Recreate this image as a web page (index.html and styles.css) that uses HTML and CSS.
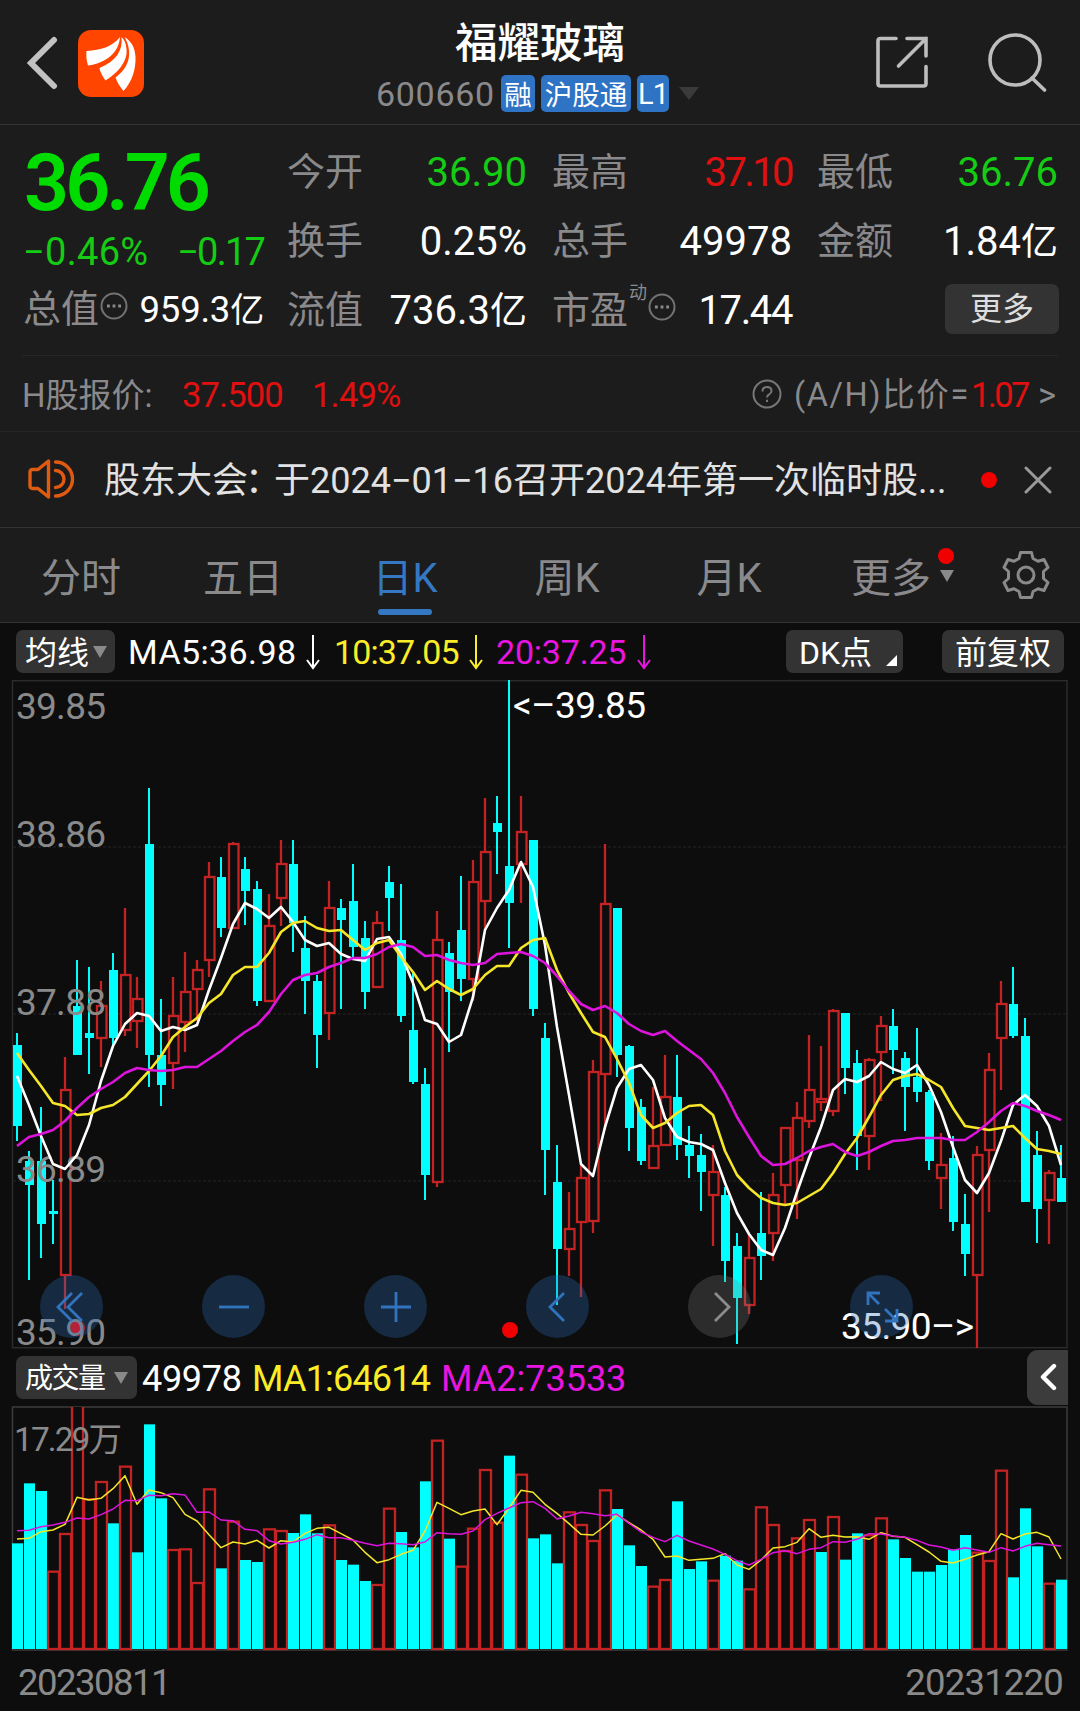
FILE: index.html
```html
<!DOCTYPE html>
<html lang="zh-CN">
<head>
  <meta charset="UTF-8">
  <meta name="viewport" content="width=device-width, initial-scale=1.0">
  <title>福耀玻璃 600660</title>
  <link rel="stylesheet" href="styles.css">
</head>
<body>
  <div id="wrap">
    <header class="header">
      <div class="headleft">
        <svg class="back" width="32" height="54" viewBox="0 0 32 54"><path d="M28 4 L5 27 L28 50"/></svg>
        <svg class="logo" width="66" height="67" viewBox="0 0 66 67">
          <rect width="66" height="67" rx="13"/>
          <path d="M8.500 21 C23 20 34 17 42 7 C41 22 29 33 10 35.500 C8.500 31 8 26 8.500 21 Z"/>
          <path d="M43.500 7 C45 21 38 31 21.500 38 C22 42 25 47 27.500 50.500 C40 43 50 31 48.500 19 C48 13 46 9 43.500 7 Z"/>
          <path d="M46.500 7 C55 22 52 37 37.500 47.500 C39 52 42 57 45.500 61 C54 52 58 39 57.500 27 C57 17 53 11 46.500 7 Z"/>
        </svg>
      </div>
      <div class="headmid">
        <h1>福耀玻璃</h1>
        <div class="code"><span class="num">600660</span><i>融</i><i class="hgt">沪股通</i><i class="l1">L1</i><b class="down"></b></div>
      </div>
      <div class="headright">
        <svg width="54" height="54" viewBox="0 0 54 54"><path d="M21 3.500 H5.500 Q3 3.500 3 6 V48.500 Q3 51 5.500 51 H48.500 Q51 51 51 48.500 V31.500 M32 3.500 H51 V21 M51 3.500 L23.500 31"/></svg>
        <svg width="60" height="60" viewBox="0 0 60 60"><circle cx="28" cy="28" r="25"/><path d="M45 46 L57.500 58"/></svg>
      </div>
    </header>

    <section class="quote">
      <div class="now">
        <div class="price">36.76</div>
        <div class="chg"><span>−0.46%</span><span class="amt">−0.17</span></div>
        <div class="cell small"><label>总值</label><svg class="dots" width="28" height="28" viewBox="0 0 28 28"><circle cx="14" cy="14" r="12.500"/><path d="M7 14h2.800M12.600 14h2.800M18.200 14h2.800"/></svg><em>959.3<u>亿</u></em></div>
      </div>
      <div class="cells">
        <div class="cell"><label>今开</label><em class="green">36.90</em></div>
        <div class="cell"><label>最高</label><em class="red tight">37.10</em></div>
        <div class="cell"><label>最低</label><em class="green">36.76</em></div>
        <div class="cell"><label>换手</label><em>0.25%</em></div>
        <div class="cell"><label>总手</label><em>49978</em></div>
        <div class="cell"><label>金额</label><em>1.84<u>亿</u></em></div>
        <div class="cell"><label>流值</label><em>736.3<u>亿</u></em></div>
        <div class="cell"><label>市盈<sup>动</sup></label><svg class="dots" width="28" height="28" viewBox="0 0 28 28"><circle cx="14" cy="14" r="12.500"/><path d="M7 14h2.800M12.600 14h2.800M18.200 14h2.800"/></svg><em class="pe">17.44</em></div>
        <div class="cell last"><button class="more">更多</button></div>
      </div>
    </section>

    <section class="hstock">
      <span class="hname">H股报价:</span>
      <span class="red hp">37.500</span>
      <span class="red hr">1.49%</span>
      <svg width="30" height="30" viewBox="0 0 30 30"><circle cx="15" cy="15" r="13.500"/><path d="M10.500 12.500 Q10.500 8 15 8 Q19.500 8 19.500 12 Q19.500 14 17 15.500 Q15 16.600 15 18.500 M15 20.800 V23"/></svg>
      <span class="ah">(A/H)比价=</span><span class="red bi">1.07</span><span class="gt">&gt;</span>
    </section>

    <section class="notice">
      <svg class="horn" width="48" height="42" viewBox="0 0 48 42"><path d="M21.500 3 V39 L11 30.500 H5.500 Q3 30.500 3 28 V14 Q3 11.500 5.500 11.500 H11 Z"/><path d="M28.500 12.500 A 8.500 8.500 0 0 1 28.500 29.500 M28.500 4 A 17 17 0 0 1 28.500 38"/></svg>
      <p>股东大会<span class="colon">：</span>于2024−01−16召开2024年第一次临时股...</p>
      <b class="dot"></b>
      <svg class="close" width="28" height="28" viewBox="0 0 28 28"><path d="M2 2 L26 26 M26 2 L2 26"/></svg>
    </section>

    <nav class="tabs">
      <a>分时</a>
      <a>五日</a>
      <a class="on">日K</a>
      <a>周K</a>
      <a>月K</a>
      <a class="moretab">更多<b class="down"></b><b class="dot"></b></a>
      <svg class="gear" width="52" height="52" viewBox="-26 -26 52 52"><path d="M-5.500 -22.500 H5.500 L7 -16.500 L12 -13.800 L18 -15.500 L22 -7.500 L17.500 -3.500 V3.500 L22 7.500 L18 15.500 L12 13.800 L7 16.500 L5.500 22.500 H-5.500 L-7 16.500 L-12 13.800 L-18 15.500 L-22 7.500 L-17.500 3.500 V-3.500 L-22 -7.500 L-18 -15.500 L-12 -13.800 L-7 -16.500 Z"/><circle r="8"/></svg>
    </nav>

    <div class="mabar">
      <button class="chip avg">均线<b class="down"></b></button>
      <span class="w ma5">MA5:36.98</span><svg class="arr w" width="14" height="36" viewBox="0 0 14 36"><path d="M7 1 V34 M1 26 L7 34 L13 26"/></svg>
      <span class="y ma10">10:37.05</span><svg class="arr y" width="14" height="36" viewBox="0 0 14 36"><path d="M7 1 V34 M1 26 L7 34 L13 26"/></svg>
      <span class="m ma20">20:37.25</span><svg class="arr m" width="14" height="36" viewBox="0 0 14 36"><path d="M7 1 V34 M1 26 L7 34 L13 26"/></svg>
      <button class="chip dk">DK点<b class="corner"></b></button>
      <button class="chip fq">前复权</button>
    </div>

    <div class="kbox">
      <svg id="kchart" width="1080" height="668" viewBox="0 680 1080 668"></svg>
      <div class="ctrls">
        <button><svg width="64" height="64" viewBox="-32 -32 64 64"><path d="M0 -14 L-14 0 L0 14 M10 -14 L-4 0 L10 14"/></svg></button>
        <button><svg width="64" height="64" viewBox="-32 -32 64 64"><path d="M-15 0 H15"/></svg></button>
        <button><svg width="64" height="64" viewBox="-32 -32 64 64"><path d="M-15 0 H15 M0 -15 V15"/></svg></button>
        <button><svg width="64" height="64" viewBox="-32 -32 64 64"><path d="M6 -14 L-8 0 L6 14"/></svg></button>
        <button class="off"><svg width="64" height="64" viewBox="-32 -32 64 64"><path d="M-5 -14 L9 0 L-5 14"/></svg></button>
        <button><svg width="64" height="64" viewBox="-32 -32 64 64"><path d="M-2 -14 H-14 V-2 M-14 -14 L-3 -3 M15 2 V14 H3 M15 14 L3 2"/></svg></button>
      </div>
    </div>

    <div class="volbar">
      <button class="chip vol">成交量<b class="down"></b></button>
      <span class="w v0">49978</span>
      <span class="y v1">MA1:64614</span>
      <span class="m v2">MA2:73533</span>
      <button class="side"><svg width="18" height="28" viewBox="0 0 18 28"><path d="M15 3 L4 14 L15 25"/></svg></button>
    </div>
    <svg id="vchart" width="1080" height="246" viewBox="0 1406 1080 246"></svg>
    <div class="dates"><span>20230811</span><span class="end">20231220</span></div>
  </div>

  <script src="chart.js"></script>
</body>
</html>
```
FILE: styles.css
```css
* { margin: 0; padding: 0; box-sizing: border-box; }
body {
  width: 1080px;
  background: #0d0d0d;
  color: #fff;
  font-family: Roboto, "Noto Sans CJK SC", sans-serif;
  line-height: 1.2;
}
i, em { font-style: normal; }
u { text-decoration: none; }
svg { display: block; fill: none; }
button { border: 0; color: #fff; font-family: inherit; line-height: 1.2; }
#wrap {
  width: 1080px;
  height: 1711px;
  overflow: hidden;
}
.red { color: #e01010; }
.green { color: #14cc14; }
.w { color: #fff; stroke: #fff; }
.y { color: #fbec28; stroke: #fbec28; }
.m { color: #e815e0; stroke: #e815e0; }
span.w, span.y, span.m { stroke: none; }
.down {
  display: inline-block;
  border: 7px solid transparent;
  border-top: 12px solid #8a8a8d;
  border-bottom: 0;
}
.dot {
  width: 16px;
  height: 16px;
  border-radius: 50%;
  background: #f00000;
}

/* header */
.header {
  height: 125px;
  display: flex;
  justify-content: space-between;
  background: #1c1c1c;
  border-bottom: 1px solid #333;
}
.headleft {
  width: 340px;
  display: flex;
  padding: 30px 0 0 25.5px;
}
.back { margin: 6px 20px 0 0; stroke: #c2c2c2; stroke-width: 6; stroke-linecap: round; }
.logo rect { fill: #ff4500; }
.logo path { fill: #fff; }
.headmid {
  width: 400px;
  padding-top: 19px;
}
h1 {
  font-size: 42.5px;
  font-weight: 500;
  line-height: 50px;
  text-align: center;
}
.code {
  display: flex;
  align-items: center;
  height: 38px;
  margin-top: 5px;
  padding-left: 36px;
}
.code .num {
  width: 125px;
  padding-top: 3px;
  font-size: 34px;
  color: #8a8a8d;
  letter-spacing: 0.7px;
}
.code i {
  height: 37px;
  width: 34px;
  margin-right: 6px;
  border-radius: 5px;
  background: #2f73c4;
  font-size: 27.5px;
  line-height: 41px;
  text-align: center;
  white-space: nowrap;
}
.code i.hgt { width: 90px; }
.code i.l1 { width: 32px; font-size: 29px; line-height: 39px; letter-spacing: -1px; }
.code .down {
  margin-left: 4px;
  border-width: 13px 10px 0;
  border-top-color: #3a3a3a;
}
.headright {
  width: 340px;
  display: flex;
  justify-content: flex-end;
  padding: 32px 33px 0 0;
}
.headright svg { stroke: #bdbdbd; stroke-width: 3.6; stroke-linecap: round; }
.headright svg:first-child { margin: 3px 58px 0 0; }

/* quote */
.quote {
  height: 230px;
  display: flex;
  background: #1c1c1c;
  padding: 13px 22px 0 24px;
}
.now { width: 241px; }
.price {
  height: 89px;
  font-size: 79px;
  line-height: 91px;
  font-weight: 600;
  letter-spacing: -4px;
  color: #00dc00;
}
.chg {
  height: 48px;
  display: flex;
  justify-content: space-between;
  font-size: 38px;
  line-height: 51px;
  color: #14cc14;
  letter-spacing: 0.3px;
}
.chg span:first-child { margin-left: -1px; }
.chg .amt { letter-spacing: -1.8px; }
.cells {
  margin-left: 23px;
  display: grid;
  grid-template-columns: 240px 240px 241px;
  column-gap: 25px;
  grid-template-rows: 69px 69px 68px;
}
.cell {
  display: flex;
  height: 69px;
  align-items: center;
}
.cell label {
  position: relative;
  font-size: 38px;
  color: #8a8a8d;
  white-space: nowrap;
}
.cell sup {
  position: absolute;
  left: 77px;
  top: -6px;
  font-size: 18px;
}
.cell em {
  margin-left: auto;
  font-size: 40px;
}
.cell em u { font-size: 37px; }
.cell em.tight { letter-spacing: -2.6px; }
.cell em.pe { letter-spacing: -1.4px; }
.cell .dots { margin: -7px 0 0 1px; }
.cells .dots { margin-left: 20px; }
.small label { margin-left: -1px; }
.small em { font-size: 36.5px; letter-spacing: -0.2px; }
.small em u { font-size: 34px; }
.dots circle { stroke: #737373; stroke-width: 2; }
.dots path { stroke: #8a8a8d; stroke-width: 2.8; }
.more {
  width: 114px;
  height: 50px;
  margin: -3px -1px 0 auto;
  border-radius: 7px;
  background: #333;
  color: #dedede;
  font-size: 32px;
}

/* h share */
.hstock {
  height: 77px;
  display: flex;
  align-items: center;
  background: linear-gradient(#272727, #272727) 22px 0 / 1036px 1px no-repeat #1c1c1c;
  border-bottom: 1px solid #272727;
  padding: 1px 22px 0 22px;
  font-size: 34.5px;
  color: #8a8a8d;
}
.hstock span { padding-top: 4px; }
.hname { width: 160px; font-size: 33px; }
.hp { width: 130px; letter-spacing: -0.9px; }
.hr { letter-spacing: -0.8px; }
.hstock svg { margin-left: auto; stroke: #77777a; stroke-width: 2; }
.ah { width: 177px; margin-left: 12px; font-size: 32.5px; white-space: nowrap; letter-spacing: 1.6px; }
.bi { width: 67px; letter-spacing: -2.6px; }
.gt { width: 20px; }

/* notice */
.notice {
  height: 96px;
  display: flex;
  align-items: center;
  background: #1c1c1c;
  border-bottom: 1px solid #333;
  padding: 0 28px 0 27px;
}
.horn { margin-top: -2px; stroke: #e05a12; stroke-width: 3.4; stroke-linejoin: round; stroke-linecap: round; }
.notice p {
  width: 858px;
  margin-left: 29px;
  padding-top: 5px;
  font-size: 36px;
  color: #e2e2e2;
  white-space: nowrap;
}
.colon { letter-spacing: -10px; margin-left: -3px; margin-right: 3px; }
.notice .dot { margin-left: 19px; }
.close { margin-left: 27px; stroke: #9a9a9a; stroke-width: 3; stroke-linecap: round; }

/* tabs */
.tabs {
  height: 95px;
  display: flex;
  background: #1c1c1c;
  border-bottom: 1px solid #333;
}
.tabs a {
  position: relative;
  width: 162px;
  font-size: 40px;
  line-height: 101px;
  text-align: center;
  color: #8a8a8d;
}
.tabs a.on { color: #3478c4; }
.tabs a.on::after {
  content: "";
  position: absolute;
  left: 54px;
  bottom: 7px;
  width: 54px;
  height: 6px;
  border-radius: 3px;
  background: #3478c4;
}
.moretab .down { position: absolute; right: 18px; top: 42px; }
.moretab .dot { position: absolute; right: 18px; top: 20px; }
.gear { margin: 21px 0 0 28px; stroke: #8a8a8d; stroke-width: 3; stroke-linejoin: round; }

/* ma bar */
.mabar, .volbar {
  height: 57px;
  display: flex;
  align-items: center;
  padding-left: 16px;
  font-size: 34px;
  white-space: nowrap;
}
.mabar span { padding-top: 2px; }
.chip {
  height: 43px;
  border-radius: 7px;
  background: #333;
  font-size: 32px;
  line-height: 46px;
  text-align: left;
  padding-left: 9px;
}
.avg { width: 99px; }
.avg .down { margin: 0 0 6px 4px; }
.arr { stroke-width: 2; }
.ma5 { width: 178px; margin-left: 13px; letter-spacing: 0.4px; }
.ma10 { width: 135px; margin-left: 14px; letter-spacing: -0.9px; }
.ma20 { width: 141px; margin-left: 13px; letter-spacing: -0.2px; }
.dk {
  width: 117px;
  margin-left: auto;
  padding-left: 13px;
  position: relative;
}
.corner {
  position: absolute;
  right: 6px;
  bottom: 7px;
  border-left: 11px solid transparent;
  border-bottom: 11px solid #fff;
}
.fq { width: 122px; margin: 0 16px 0 39px; padding-left: 13px; }

/* charts */
#kchart, #vchart { overflow: visible; }
.kbox { position: relative; height: 668px; }
.frame { stroke: #2b2b2b; stroke-width: 1.5; }
.vframe { stroke: #3d3d3d; stroke-width: 1.5; }
.grid { stroke: #1d1d1d; stroke-width: 1.5; stroke-dasharray: 3 2; }
.up { stroke: #c42323; stroke-width: 2.3; fill: #0d0d0d; }
.fall { fill: #00ffff; }
.line { stroke-width: 2.6; stroke-linejoin: round; fill: none; }
.thin { stroke-width: 1.5; }
.white { stroke: #fff; }
.yellow { stroke: #f5e62a; }
.pink { stroke: #dc14dc; }
.axis { fill: #8a8a8a; font-size: 37px; }
.axis.max { font-size: 33.5px; }
.mark { fill: #fff; font-size: 37px; }
.rdot { fill: #f00000; }
.ctrls {
  position: absolute;
  left: 40px;
  top: 595px;
  display: flex;
  gap: 99px;
}
.ctrls button {
  width: 63px;
  height: 63px;
  border-radius: 50%;
  background: rgba(44, 110, 190, 0.3);
}
.ctrls svg { stroke: #3273bd; stroke-width: 2.8; margin: -0.5px; }
.ctrls .off { background: rgba(130, 130, 130, 0.27); }
.ctrls .off svg { stroke: #8c8c8c; }

/* volume */
.volbar { height: 58px; font-size: 36px; }
.vol { width: 121px; font-size: 28px; letter-spacing: -1.5px; }
.vol .down { margin: 0 0 4px 9px; }
.volbar span { padding-top: 5px; }
.v0 { width: 110px; margin-left: 5px; letter-spacing: -0.3px; }
.v1 { width: 189px; letter-spacing: -0.8px; }
.side {
  width: 41px;
  height: 55px;
  margin: 0 12px 0 auto;
  padding-left: 12px;
  border-radius: 11px 0 0 11px;
  background: #3c3c3c;
}
.side svg { stroke: #fff; stroke-width: 4.4; stroke-linecap: round; stroke-linejoin: round; }
.dates {
  display: flex;
  justify-content: space-between;
  padding: 9px 17px 0 18px;
  font-size: 36.5px;
  line-height: 43px;
  letter-spacing: -1.5px;
  color: #8a8a8a;
}
.dates .end { letter-spacing: -0.8px; }
```
FILE: chart.js
```js
// [type, high, bodyTop, bodyBottom, low]  u = up, d = down
const candles = [
  ["d",1033,1045,1126,1141],["d",1151,1161,1185,1280],["d",1107,1161,1224,1258],["d",1180,1211,1214,1244],
  ["u",1057,1089,1276,1309],["d",960,1006,1055,1055],["d",967,1033,1038,1074],["u",981,1005,1039,1067],
  ["d",953,970,1038,1046],["u",908,974,1031,1036],["u",977,998,1022,1048],["d",788,844,1055,1087],
  ["d",999,1055,1085,1106],["u",977,1015,1064,1089],["u",952,991,1023,1052],["u",960,969,990,1021],
  ["u",862,876,961,977],["d",857,877,928,937],["u",842,843,929,929],["d",857,869,891,925],
  ["d",881,889,1001,1006],["u",894,925,1002,1002],["u",840,863,899,926],["d",840,864,923,952],
  ["d",916,948,981,1014],["d",975,981,1035,1068],["u",881,907,1014,1040],["d",899,908,920,1009],
  ["d",864,901,947,957],["d",921,938,992,1009],["u",911,922,988,988],["d",866,882,898,931],
  ["d",884,940,1016,1022],["d",971,1030,1082,1084],["d",1068,1084,1175,1200],["u",911,939,1183,1187],
  ["d",942,953,992,1052],["d",876,930,979,1001],["u",860,881,980,1001],["u",798,851,902,930],
  ["d",796,823,832,874],["d",680,866,903,948],["u",796,831,865,903],["d",840,840,1009,1016],
  ["d",1023,1038,1150,1195],["d",1145,1182,1249,1305],["u",1192,1228,1250,1276],["u",1165,1177,1223,1297],
  ["u",1060,1071,1222,1233],["u",844,903,1075,1130],["d",908,908,1055,1077],["d",1045,1046,1128,1151],
  ["d",1099,1107,1161,1165],["u",1087,1145,1169,1169],["u",1055,1096,1146,1146],["d",1055,1097,1145,1160],
  ["d",1126,1145,1156,1178],["d",1134,1155,1172,1211],["u",1145,1171,1196,1246],["d",1187,1195,1261,1282],
  ["d",1233,1246,1298,1344],["u",1235,1257,1306,1314],["d",1192,1233,1256,1280],["u",1173,1194,1234,1261],
  ["u",1127,1127,1186,1205],["u",1102,1117,1161,1219],["u",1035,1089,1122,1128],["u",1046,1098,1103,1111],
  ["u",1009,1010,1112,1116],["d",1013,1013,1068,1094],["d",1050,1063,1136,1170],["u",1058,1059,1137,1170],
  ["u",1016,1025,1053,1101],["d",1009,1026,1050,1074],["d",1052,1058,1087,1131],["d",1028,1077,1092,1102],
  ["d",1090,1092,1161,1170],["u",1133,1164,1179,1209],["d",1136,1158,1222,1231],["d",1194,1224,1254,1276],
  ["u",1146,1154,1276,1348],["u",1053,1069,1151,1212],["u",981,1003,1039,1090],["d",967,1004,1036,1038],
  ["d",1018,1036,1202,1202],["d",1131,1155,1209,1243],["u",1170,1172,1201,1244],["d",1145,1178,1202,1202]
];
const ma5 = [1076,1105,1136,1164,1169,1155,1125,1081,1046,1024,1013,1016,1031,1027,1030,1025,990,958,924,903,909,918,907,922,940,946,943,954,959,961,939,937,954,983,1020,1024,1042,1035,997,930,908,890,862,887,945,1027,1095,1164,1176,1127,1088,1069,1065,1080,1118,1137,1142,1144,1150,1183,1213,1234,1250,1255,1228,1192,1158,1127,1090,1079,1082,1076,1062,1069,1073,1065,1085,1112,1147,1180,1193,1173,1141,1105,1095,1106,1126,1165];
const ma10 = [1053,1070,1086,1103,1106,1115,1114,1108,1105,1097,1084,1071,1056,1037,1027,1018,1003,994,975,967,967,953,932,923,921,928,931,930,940,950,943,940,957,972,990,981,989,995,989,975,966,966,948,940,938,970,993,1013,1032,1037,1059,1083,1115,1128,1123,1113,1106,1105,1115,1151,1175,1188,1198,1203,1205,1203,1196,1189,1173,1154,1138,1117,1095,1080,1076,1074,1080,1087,1108,1126,1128,1130,1128,1126,1138,1149,1151,1154];
const ma20 = [1146,1137,1134,1130,1121,1108,1097,1089,1082,1073,1068,1070,1071,1070,1067,1067,1059,1051,1041,1032,1025,1012,994,980,975,973,967,963,958,958,954,947,944,947,956,955,960,963,965,963,954,953,952,956,963,976,991,1004,1010,1006,1013,1024,1031,1035,1031,1041,1050,1059,1073,1093,1117,1137,1156,1165,1164,1158,1151,1147,1144,1152,1156,1152,1146,1141,1140,1138,1138,1138,1140,1140,1132,1122,1111,1103,1106,1111,1115,1120];

// volume values are thirds of a pixel, measured down from y = 1350
const vols = [580,400,423,662,549,120,445,393,520,347,607,223,445,597,595,696,415,655,512,630,636,535,540,549,493,550,523,630,644,693,702,473,546,592,394,269,566,647,533,357,515,317,371,565,553,640,484,522,570,418,477,586,648,707,687,454,657,634,689,617,632,715,469,522,600,562,507,606,498,629,550,553,502,568,624,665,665,645,598,555,605,630,359,682,475,589,698,689];
const volUp = [3,4,5,6,7,9,13,14,15,16,18,21,22,26,30,31,35,37,38,39,40,42,46,47,48,49,53,54,58,61,62,63,64,65,66,68,71,72,80,81,82,86];
const vma1 = [567,565,545,540,523,442,450,445,416,377,463,420,428,443,493,513,554,593,576,582,571,594,572,576,550,535,532,551,570,607,638,629,613,601,543,457,475,494,483,477,524,474,421,427,463,490,521,553,555,528,495,518,540,568,621,618,631,628,625,611,645,658,630,594,590,577,536,562,556,561,560,568,548,559,562,584,606,634,639,628,615,605,551,567,552,547,561,627];
const vma2 = [542,541,530,525,517,504,507,494,477,451,452,436,437,431,435,487,486,510,512,538,542,572,582,577,568,554,563,563,571,580,587,580,581,584,576,548,551,553,543,509,490,474,458,455,475,507,498,487,491,497,493,520,546,562,575,556,573,585,597,613,632,645,628,608,602,611,598,593,575,577,568,551,552,558,562,571,585,591,601,593,600,607,593,603,589,580,584,588];

const cx = i => 17 + i * 12;
const volY = v => 1350 + v / 3;

function line(list, cls) {
  let pts = list.map((y, i) => `${cx(i)},${y}`).join(" ");
  return `<polyline class="line ${cls}" points="${pts}"/>`;
}

// k line chart
let k = `<rect class="frame" x="12.5" y="680.7" width="1054.5" height="667"/>`;
[847, 1014, 1181].forEach(y => {
  k += `<path class="grid" d="M13 ${y} H1067"/>`;
});
candles.forEach(([type, hi, top, bot, lo], i) => {
  let x = cx(i);
  if (type === "d") {
    k += `<rect class="fall" x="${x - 1}" y="${hi}" width="2" height="${lo - hi}"/>`;
    k += `<rect class="fall" x="${x - 4}" y="${top}" width="9" height="${bot - top}"/>`;
  } else {
    k += `<path class="up" d="M${x} ${hi} V${top} M${x} ${bot} V${lo}"/>`;
    k += `<rect class="up" x="${x - 4}" y="${top + 1}" width="9.5" height="${bot - top - 2}"/>`;
  }
});
k += `<circle class="rdot" cx="77" cy="1328" r="8"/><circle class="rdot" cx="510" cy="1330" r="8"/>`;
[["39.85", 719], ["38.86", 847], ["37.88", 1015], ["36.89", 1182], ["35.90", 1345]].forEach(([t, y]) => {
  k += `<text class="axis" x="16" y="${y}" textLength="90">${t}</text>`;
});
k += line(ma5, "white") + line(ma10, "yellow") + line(ma20, "pink");
k += `<text class="mark" x="513" y="718" textLength="133">&lt;–39.85</text>`;
k += `<text class="mark" x="841" y="1339" textLength="133">35.90–&gt;</text>`;
document.querySelector("#kchart").innerHTML = k;

// volume chart
let v = `<rect class="vframe" x="12.5" y="1407" width="1054.5" height="243"/>`;
vols.forEach((n, i) => {
  let x = cx(i);
  let y = volY(n);
  if (!volUp.includes(i)) {
    v += `<rect class="fall" x="${x - 5}" y="${y}" width="11" height="${1649 - y}"/>`;
  } else if (y < 1406) {
    // bar runs out of the top of the frame
    v += `<path class="up" d="M${x - 5} 1407 V1649 H${x + 6} V1407"/>`;
  } else {
    v += `<rect class="up" x="${x - 5}" y="${y + 1}" width="11" height="${1648 - y}"/>`;
  }
});
v += `<text class="axis max" x="14" y="1451" textLength="108">17.29万</text>`;
v += line(vma1.map(volY), "yellow thin") + line(vma2.map(volY), "pink thin");
document.querySelector("#vchart").innerHTML = v;
```
